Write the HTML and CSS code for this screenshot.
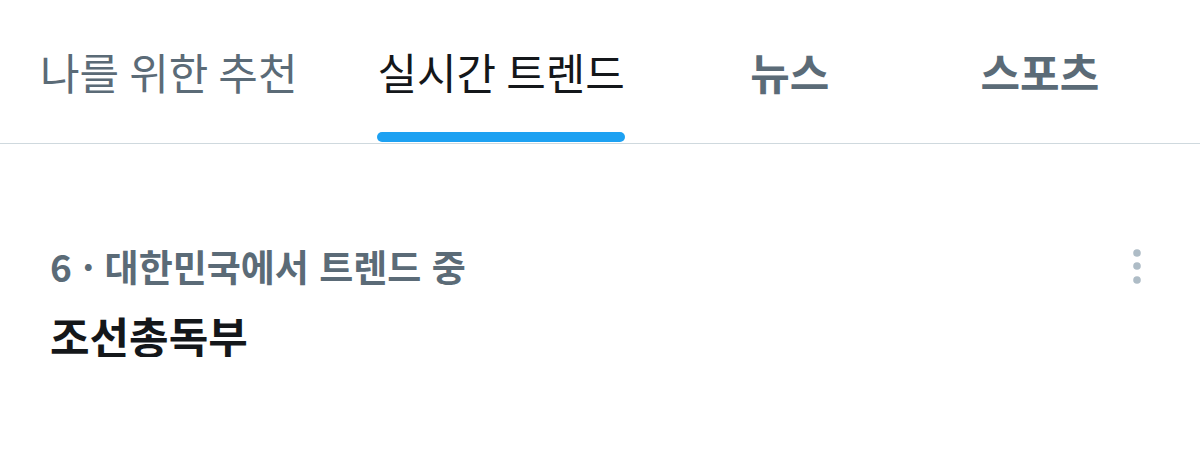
FILE: index.html
```html
<!DOCTYPE html>
<html lang="ko">
<head>
    <meta charset="UTF-8">
    <meta name="viewport" content="width=device-width, initial-scale=1.0">
    <title>실시간 트렌드</title>
    <link rel="stylesheet" href="styles.css">
</head>
<body>
    <nav class="tabs">
        <a class="tab" href="#">
            <span class="tab-label">나를 위한 추천</span>
        </a>
        <a class="tab active" href="#">
            <span class="tab-label">실시간 트렌드</span>
            <span class="tab-bar"></span>
        </a>
        <a class="tab strong" href="#">
            <span class="tab-label">뉴스</span>
        </a>
        <a class="tab strong" href="#">
            <span class="tab-label">스포츠</span>
        </a>
    </nav>

    <div class="trend">
        <div class="trend-body">
            <div class="trend-meta">6 · 대한민국에서 트렌드 중</div>
            <div class="trend-title">조선총독부</div>
        </div>
        <button class="more" aria-label="더 보기">
            <svg width="8" height="36" viewBox="0 0 8 36">
                <circle cx="4" cy="4" r="3.8"/>
                <circle cx="4" cy="17" r="3.8"/>
                <circle cx="4" cy="31" r="3.8"/>
            </svg>
        </button>
    </div>
</body>
</html>
```

FILE: styles.css
```css
body {
    margin: 0;
    background-color: #fff;
    font-family: "Noto Sans CJK KR", "Noto Sans", sans-serif;
    color: #14171a;
}
.tabs {
    display: flex;
    height: 143px;
    border-bottom: 1px solid #cfd9de;
}
.tab {
    display: flex;
    flex-direction: column;
    align-items: center;
    box-sizing: border-box;
    min-width: 250px;
    padding: 50px 40px 0;
    text-decoration: none;
    color: #5b6b77;
}
.tab-label {
    font-size: 43px;
    line-height: 43px;
    word-spacing: -2px;
    white-space: nowrap;
}
.tab.active {
    color: #14171a;
}
.tab.strong .tab-label {
    font-weight: 700;
}
.tab-bar {
    align-self: stretch;
    height: 10px;
    margin-top: auto;
    margin-bottom: 1px;
    border-radius: 5px;
    background-color: #1da1f2;
}
.trend {
    display: flex;
    align-items: flex-start;
    padding: 104px 59px 0 50px;
}
.trend-body {
    flex: 1;
}
.trend-meta {
    font-size: 37px;
    line-height: 37px;
    font-weight: 700;
    color: #5b6b77;
}
.trend-title {
    margin-top: 29px;
    font-size: 43px;
    line-height: 43px;
    font-weight: 700;
}
.more {
    padding: 0;
    border: 0;
    background: none;
    fill: #aebcc6;
    line-height: 0;
    margin-top: 1px;
}
```
